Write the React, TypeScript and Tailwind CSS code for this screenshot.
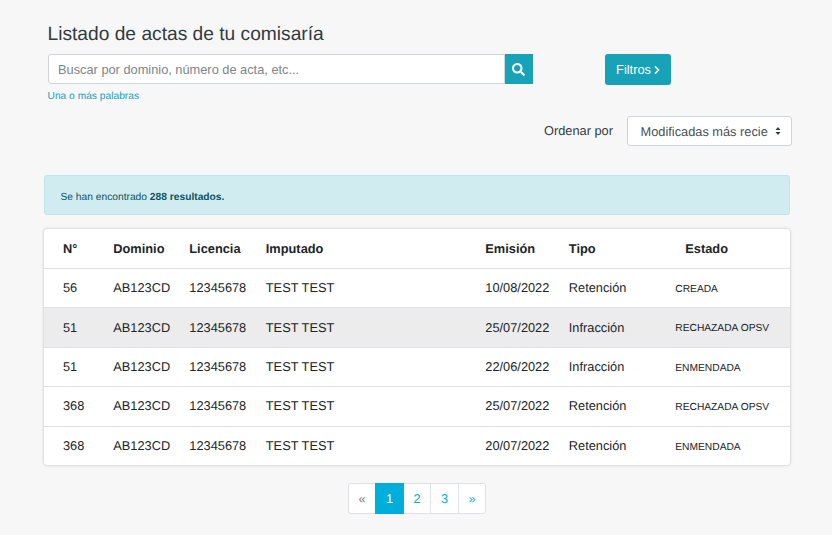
import React from "react";

const rows = [
  ["56", "AB123CD", "12345678", "TEST TEST", "10/08/2022", "Retención", "CREADA", false],
  ["51", "AB123CD", "12345678", "TEST TEST", "25/07/2022", "Infracción", "RECHAZADA OPSV", true],
  ["51", "AB123CD", "12345678", "TEST TEST", "22/06/2022", "Infracción", "ENMENDADA", false],
  ["368", "AB123CD", "12345678", "TEST TEST", "25/07/2022", "Retención", "RECHAZADA OPSV", false],
  ["368", "AB123CD", "12345678", "TEST TEST", "20/07/2022", "Retención", "ENMENDADA", false],
] as const;

export default function App() {
  return (
    <div className="h-[535px] w-[832px] overflow-hidden bg-[#f7f7f8] font-['Liberation_Sans',sans-serif] text-[#212529] [text-rendering:geometricPrecision]">
      <div className="pl-[47.5px] pt-[23px]">
        <h1 className="text-[19.2px] leading-[23px] text-[#343a40]">Listado de actas de tu comisaría</h1>
      </div>
      <div className="mt-[8px] flex items-start pl-[48px]">
        <div className="flex h-[30px] w-[485px]">
          <input
            readOnly
            placeholder="Buscar por dominio, número de acta, etc..."
            className="h-[30px] w-[457px] rounded-l-[3px] border border-[#ced4da] bg-white px-[9px] text-[12.8px] text-[#495057] outline-none placeholder:text-[#7d848b]"
          />
          <div className="flex h-[30px] w-[28px] items-center justify-center bg-[#17a2b8]">
            <svg className="-ml-px" width="13" height="13" viewBox="0 0 512 512" fill="white">
              <path d="M505 442.7L405.3 343c-4.5-4.5-10.6-7-17-7H372c27.6-35.3 44-79.7 44-128C416 93.1 322.9 0 208 0S0 93.1 0 208s93.1 208 208 208c48.3 0 92.7-16.4 128-44v16.3c0 6.4 2.5 12.5 7 17l99.7 99.7c9.4 9.4 24.6 9.4 33.9 0l28.3-28.3c9.4-9.4 9.4-24.6.1-34zM208 336c-70.7 0-128-57.2-128-128 0-70.7 57.2-128 128-128 70.7 0 128 57.2 128 128 0 70.7-57.2 128-128 128z" />
            </svg>
          </div>
        </div>
        <button className="ml-[72px] flex h-[31px] w-[66px] items-center justify-center gap-[3px] rounded-[3px] bg-[#17a2b8] text-[12.8px] text-white">
          Filtros
          <svg width="6" height="10" viewBox="0 0 320 512" fill="white">
            <path d="M285.5 273L91.1 467.3c-9.4 9.4-24.6 9.4-33.9 0l-22.7-22.7c-9.4-9.4-9.4-24.5 0-33.9L188.5 256 34.5 101.3c-9.3-9.4-9.3-24.5 0-33.9l22.7-22.7c9.4-9.4 24.6-9.4 33.9 0L285.5 239c9.4 9.4 9.4 24.6 0 34z" />
          </svg>
        </button>
      </div>
      <div className="mt-[5px] pl-[47.5px] text-[10.24px] leading-[14px] text-[#17a2b8]">Una o más palabras</div>

      <div className="mt-[12px] flex items-center justify-end pr-[40px]">
        <span className="mr-[14px] text-[12.8px] text-[#343a40]">Ordenar por</span>
        <div className="relative h-[30px] w-[165px] rounded-[3px] border border-[#ced4da] bg-white pl-[12.5px] text-[12.8px] leading-[29px] text-[#495057]">
          <div className="w-[127px] overflow-hidden whitespace-nowrap">Modificadas más recientes</div>
          <svg className="absolute right-[10px] top-[9px]" width="6" height="10" viewBox="0 0 6 10" fill="#343a40">
            <path d="M3 1L5.5 4H0.5Z M3 9L0.5 6H5.5Z" />
          </svg>
        </div>
      </div>

      <div className="ml-[44px] mt-[29px] flex h-[40px] w-[746px] items-center rounded-[3px] border border-[#bee5eb] bg-[#d1ecf1] pl-[15.5px] pt-[5px] text-[10.24px] text-[#0c5460]">
        <span>
          Se han encontrado <b>288 resultados.</b>
        </span>
      </div>

      <div className="ml-[44px] mt-[14px] w-[746px] overflow-hidden rounded-[3px] bg-white shadow-[0_0_3px_rgba(0,0,0,0.25)]">
        <table className="w-[746px] table-fixed border-collapse text-[12.8px]">
          <colgroup>
            <col className="w-[69.3px]" />
            <col className="w-[76px]" />
            <col className="w-[76.5px]" />
            <col className="w-[219.5px]" />
            <col className="w-[83.5px]" />
            <col className="w-[106.5px]" />
            <col />
          </colgroup>
          <thead>
            <tr className="h-[39.5px] border-b border-[#dee2e6] text-left font-bold">
              <th className="pl-[19px]">N°</th>
              <th>Dominio</th>
              <th>Licencia</th>
              <th>Imputado</th>
              <th>Emisión</th>
              <th>Tipo</th>
              <th className="pl-[10px]">Estado</th>
            </tr>
          </thead>
          <tbody>
            {rows.map((r, i) => {
              const pad = r[7] ? "" : "pb-px";
              return (
                <tr key={i} className={`h-[39.4px] ${i < 4 ? "border-b border-[#dee2e6]" : ""} ${r[7] ? "bg-[#ececec]" : ""}`}>
                  <td className={`pl-[19px] ${pad}`}>{r[0]}</td>
                  <td className={pad}>{r[1]}</td>
                  <td className={pad}>{r[2]}</td>
                  <td className={pad}>{r[3]}</td>
                  <td className={pad}>{r[4]}</td>
                  <td className={pad}>{r[5]}</td>
                  <td className="pt-[3px] text-[10.24px]">{r[6]}</td>
                </tr>
              );
            })}
          </tbody>
        </table>
      </div>

      <div className="ml-[348px] mt-[18px] flex h-[31px] w-[138px] rounded-[3px] border border-[#dee2e6] bg-white text-[12.8px] leading-[29px] text-[#00aedb]">
        <span className="w-[26px] text-center text-[#6c757d]">«</span>
        <span className="-my-px h-[31px] w-[29px] bg-[#00aedb] text-center leading-[31px] text-white">1</span>
        <span className="w-[27px] border-r border-[#dee2e6] text-center">2</span>
        <span className="w-[28px] border-r border-[#dee2e6] text-center">3</span>
        <span className="flex-1 text-center">»</span>
      </div>
    </div>
  );
}
